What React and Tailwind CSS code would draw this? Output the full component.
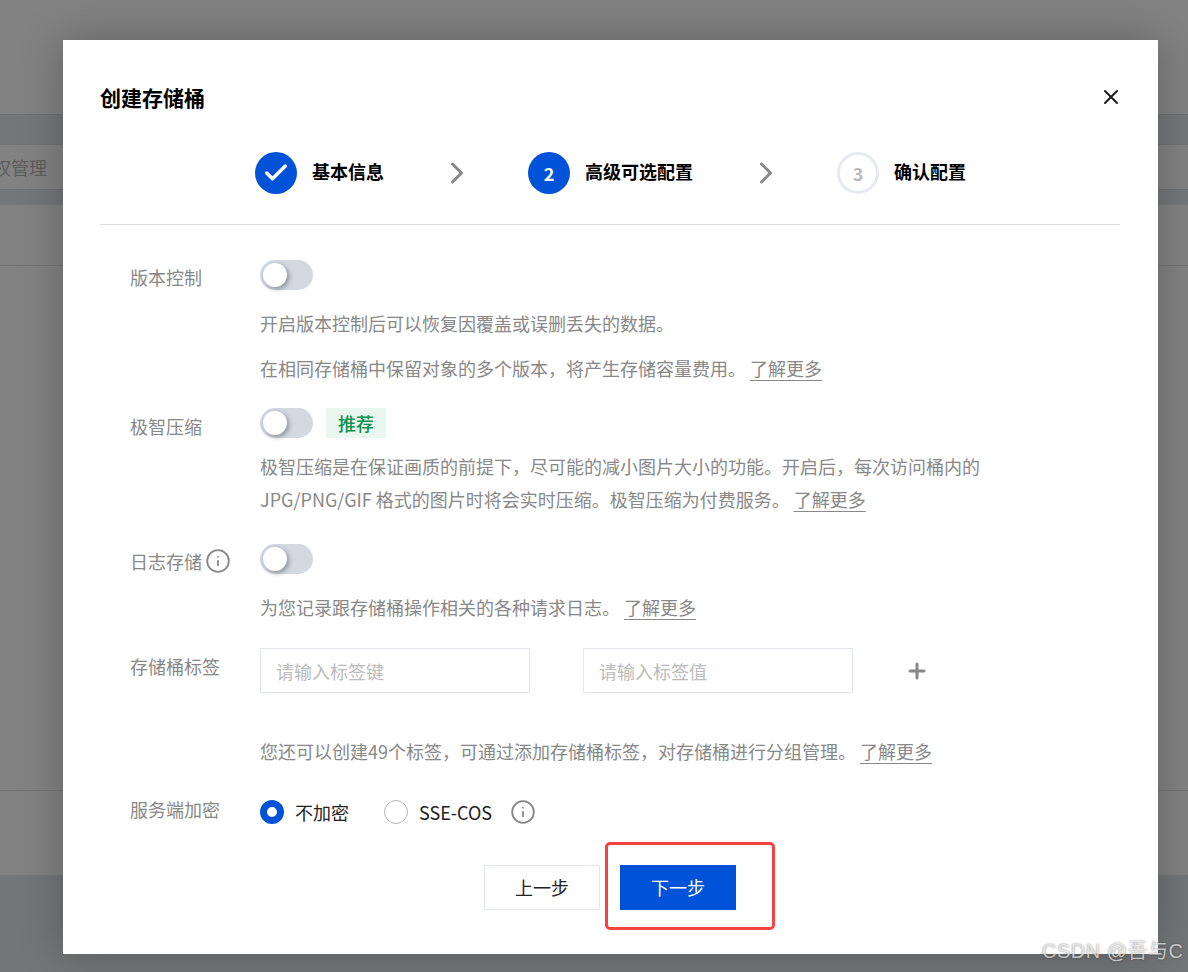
import { X, Check, ChevronRight, Plus, Info } from "lucide-react"

const FONT = "font-['Noto_Sans_CJK_SC','Noto_Sans',sans-serif]"

function Toggle() {
  return (
    <div className="flex h-[30px] w-[53px] items-center rounded-full bg-[#d3d8e3] pl-[3px]">
      <div className="h-6 w-6 rounded-full bg-white shadow-[2px_2px_5px_rgba(0,0,0,0.35)]" />
    </div>
  )
}

function Link() {
  return <a className="ml-[4px] text-[#888888] underline underline-offset-4">了解更多</a>
}

function Step({ circle, label, children }) {
  return (
    <div className="flex items-center">
      <div className={`flex h-[42px] w-[42px] items-center justify-center rounded-full ${circle}`}>{children}</div>
      <span className="mb-[5px] ml-[15px] text-[18px] leading-[36px] font-bold text-black">{label}</span>
    </div>
  )
}

function Arrow() {
  return <ChevronRight className="mr-[53px] ml-[55px] h-[36px] w-[36px] text-[#888888]" strokeWidth={2} />
}

function Row({ label, info, top, children, className }) {
  return (
    <div className={`flex items-start ${className}`}>
      <div className={`flex w-[130px] shrink-0 items-center text-[18px] leading-[28px] text-[#888888] ${top}`}>
        {label}
        {info && <Info className="ml-[3px] h-[26px] w-[26px] text-[#888888]" strokeWidth={1.7} />}
      </div>
      <div className="min-w-0 flex-1">{children}</div>
    </div>
  )
}

function Modal() {
  return (
    <div className={`absolute top-[40px] left-[63px] h-[914px] w-[1095px] bg-white pr-[38px] pl-[37px] shadow-[0_0_40px_rgba(0,0,0,0.25)] ${FONT}`}>
      <div className="flex h-[112px] items-center justify-between pt-[1px]">
        <h1 className="text-[21px] leading-[30px] font-bold text-black">创建存储桶</h1>
        <X className="mr-[-3px] h-[24px] w-[24px] text-[#1a1a1a]" strokeWidth={2} />
      </div>
      <div className="flex h-[73px] items-start border-b border-[#dcdde0] pl-[155px]">
        <div className="flex items-center">
          <Step circle="bg-[#0052d9]" label="基本信息">
            <Check className="h-7 w-7 text-white" strokeWidth={3} />
          </Step>
          <Arrow />
          <Step circle="bg-[#0052d9]" label="高级可选配置">
            <span className="text-[18px] font-bold text-white">2</span>
          </Step>
          <Arrow />
          <Step circle="border-[3px] border-[#e7eaf0]" label="确认配置">
            <span className="text-[18px] font-bold text-[#bbbbbb]">3</span>
          </Step>
        </div>
      </div>

      <div className="pt-[35px] pl-[30px] text-[18px] text-[#888888]">
        <Row label="版本控制" top="pt-[3px]">
          <Toggle />
          <p className="mt-[19px] leading-[28px]">开启版本控制后可以恢复因覆盖或误删丢失的数据。</p>
          <p className="mt-[17px] leading-[28px]">
            在相同存储桶中保留对象的多个版本，将产生存储容量费用。
            <Link />
          </p>
        </Row>

        <Row label="极智压缩" top="pt-[4px]" className="mt-[26px]">
          <div className="flex items-center gap-[13px]">
            <Toggle />
            <span className="flex h-[30px] w-[60px] items-center justify-center rounded-[2px] bg-[#e8f7ef] text-[18px] font-medium text-[#0a8f4d]">
              推荐
            </span>
          </div>
          <p className="mt-[12px] w-[730px] leading-[33px]">
            极智压缩是在保证画质的前提下，尽可能的减小图片大小的功能。开启后，每次访问桶内的
            JPG/PNG/GIF 格式的图片时将会实时压缩。极智压缩为付费服务。
            <Link />
          </p>
        </Row>

        <Row label="日志存储" info top="pt-[3px]" className="mt-[28px]">
          <Toggle />
          <p className="mt-[19px] leading-[28px]">
            为您记录跟存储桶操作相关的各种请求日志。
            <Link />
          </p>
        </Row>

        <Row label="存储桶标签" top="pt-[4px]" className="mt-[27px]">
          <div className="flex items-center">
            <input
              placeholder="请输入标签键"
              className="h-[45px] w-[270px] border border-[#e3e6ee] px-[15px] text-[18px] outline-none placeholder:text-[#bbbbbb]"
            />
            <input
              placeholder="请输入标签值"
              className="ml-[53px] h-[45px] w-[270px] border border-[#e3e6ee] px-[15px] text-[18px] outline-none placeholder:text-[#bbbbbb]"
            />
            <Plus className="ml-[52px] h-6 w-6 text-[#888888]" strokeWidth={3} />
          </div>
          <p className="mt-[44px] leading-[28px]">
            您还可以创建49个标签，可通过添加存储桶标签，对存储桶进行分组管理。
            <Link />
          </p>
        </Row>

        <Row label="服务端加密" top="mt-[-3px]" className="mt-[33px]">
          <div className="flex items-center text-[18px] text-[#222222]">
            <span className="h-6 w-6 rounded-full border-[7px] border-[#0052d9]" />
            <span className="ml-[11px] leading-[28px]">不加密</span>
            <span className="ml-[35px] h-6 w-6 rounded-full border border-[#b5b5b5]" />
            <span className="ml-[11px] leading-[28px]">SSE-COS</span>
            <Info className="ml-[18px] h-[26px] w-[26px] text-[#888888]" strokeWidth={1.7} />
          </div>
        </Row>
      </div>

      <div className="mt-[39px] flex justify-center gap-[20px] text-[18px]">
        <button className="relative h-[45px] w-[116px] border border-[#e3e6ee] text-[#222222]">上一步</button>
        <div className="relative">
          <button className="h-[45px] w-[116px] bg-[#0052d9] text-white">下一步</button>
          <div className="absolute top-[-23px] left-[-15px] h-[88px] w-[170px] rounded-[5px] border-[3px] border-[#f54343]" />
        </div>
      </div>
    </div>
  )
}

export default function App() {
  return (
    <div className="relative h-[972px] w-[1188px] overflow-hidden bg-[#828282]">
      <div className="h-[114px]" />
      <div className="h-[31px] border-y border-[#6f7072] bg-[#757678]" />
      <div className={`flex h-[44px] items-center text-[18px] text-[#5c5c5c] ${FONT}`}>
        <span className="ml-[-25px] whitespace-nowrap">授权管理</span>
      </div>
      <div className="h-[16px] border-t border-[#6f7072] bg-[#757678]" />
      <div className="h-[61px] border-b border-[#727272]" />
      <div className="h-[525px] border-b border-[#727272]" />
      <div className="h-[84px]" />
      <div className="h-[97px] bg-[#747577]" />
      <Modal />
      <div className="absolute top-[938px] left-[1042px] font-['Liberation_Sans','Noto_Sans_CJK_SC',sans-serif] text-[20px] leading-[26px] tracking-[0.5px] whitespace-nowrap text-white/70 [text-shadow:0_0_2px_rgba(0,0,0,0.5)]">
        CSDN @吾与C
      </div>
    </div>
  )
}
